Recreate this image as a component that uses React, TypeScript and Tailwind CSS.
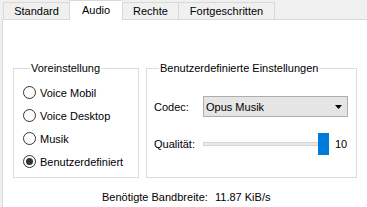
import React from 'react';

const tabs = [
  { label: 'Standard', w: 'w-[66px]' },
  { label: 'Audio', w: 'w-[53px]', active: true },
  { label: 'Rechte', w: 'w-[56px]' },
  { label: 'Fortgeschritten', w: 'w-[97px] border-r' },
];

const presets = ['Voice Mobil', 'Voice Desktop', 'Musik', 'Benutzerdefiniert'];

function Radio({ checked }: { checked?: boolean }) {
  return (
    <span className="w-[13px] h-[13px] rounded-full border border-[#333333] bg-white flex items-center justify-center shrink-0">
      {checked && <span className="w-[7px] h-[7px] rounded-full bg-[#333333]" />}
    </span>
  );
}

export default function App() {
  return (
    <div className="w-[367px] h-[207px] bg-[#f0f0f0] overflow-hidden font-['Liberation_Sans',Arial,sans-serif] text-[11px] text-black leading-[14px]">
      {/* Tab strip */}
      <div className="h-[19px] flex items-end pl-[3px]">
        {tabs.map((t) =>
          t.active ? (
            <div
              key={t.label}
              className={`${t.w} h-[20px] mb-[-1px] relative z-10 bg-white border-l border-t border-[#d9d9d9] flex items-center justify-center pb-[2px]`}
            >
              {t.label}
            </div>
          ) : (
            <div
              key={t.label}
              className={`${t.w} h-[17px] bg-[#f0f0f0] border-l border-t border-[#d9d9d9] flex items-center justify-center`}
            >
              {t.label}
            </div>
          )
        )}
      </div>

      {/* Tab page */}
      <div className="ml-[2px] w-[400px] h-[300px] bg-white border-t border-l border-[#d9d9d9] pt-[41px] pl-[10px]">
        <div className="flex gap-[7px]">
          <fieldset className="w-[126px] h-[117px] border border-[#dcdcdc] pl-[9px] pt-[6px]">
            <legend className="ml-[7px] px-[1px]">Voreinstellung</legend>
            {presets.map((p, i) => (
              <div key={p} className="h-[23px] flex items-center gap-[4px]">
                <Radio checked={i === 3} />
                <span>{p}</span>
              </div>
            ))}
          </fieldset>

          <fieldset className="w-[211px] h-[117px] border border-[#dcdcdc] pl-[7px] pt-[21px]">
            <legend className="ml-[5px] px-[1px]">Benutzerdefinierte Einstellungen</legend>
            <div className="flex items-center h-[21px]">
              <span className="w-[49px]">Codec:</span>
              <div className="w-[145px] h-[21px] bg-[#e5e5e5] border border-[#adadad] flex items-center justify-between pl-[2px] pr-[5px]">
                <span>Opus Musik</span>
                <svg width="7" height="4" viewBox="0 0 7 4">
                  <path d="M0 0 H7 L3.5 4 Z" fill="#000" />
                </svg>
              </div>
            </div>
            <div className="flex items-center h-[22px] mt-[16px]">
              <span className="w-[49px]">Qualität:</span>
              <div className="relative w-[126px] h-[22px] flex items-center">
                <div className="w-full h-[4px] bg-[#e7eaea] border border-[#d6d6d6]" />
                <div className="absolute right-0 top-0 w-[11px] h-[22px] bg-[#007ad9]" />
              </div>
              <span className="ml-[6px]">10</span>
            </div>
          </fieldset>
        </div>

        <div className="flex mt-[12px] pl-[89px]">
          <span className="w-[113px]">Benötigte Bandbreite:</span>
          <span>11.87 KiB/s</span>
        </div>
      </div>
    </div>
  );
}
